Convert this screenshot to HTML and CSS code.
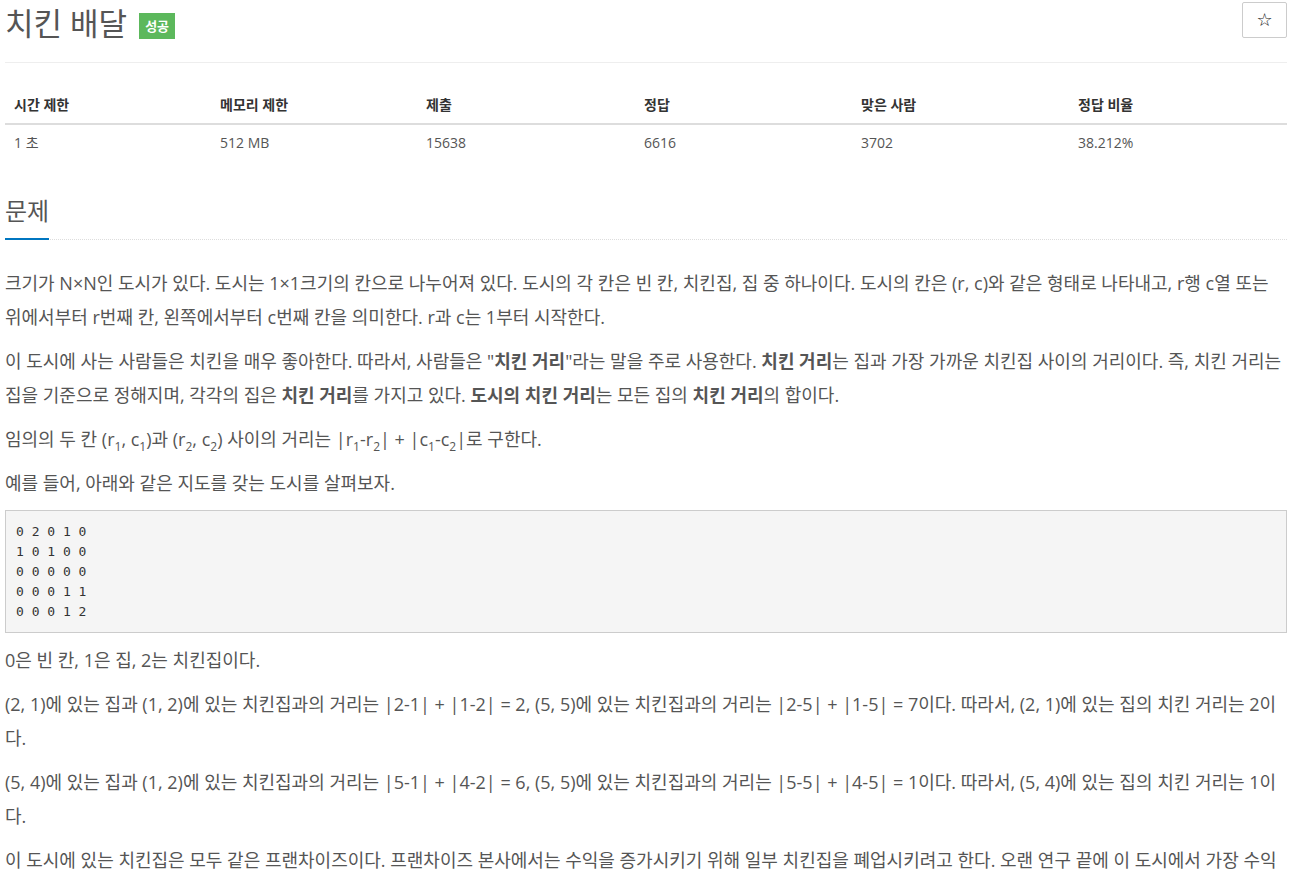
FILE: index.html
```
<!doctype html>
<html>
<head>
<meta charset="UTF-8">
<title>치킨 배달</title>
<link rel="stylesheet" href="styles.css">
</head>
<body>
<div class="container">

<div class="page-header">
  <h1 class="title">치킨 배달 <span class="label-success">성공</span></h1>
  <a class="btn-star" href="#">☆</a>
</div>

<table class="info-table">
  <thead>
    <tr>
      <th class="c1">시간 제한</th>
      <th class="c2">메모리 제한</th>
      <th class="c3">제출</th>
      <th class="c4">정답</th>
      <th class="c5">맞은 사람</th>
      <th>정답 비율</th>
    </tr>
  </thead>
  <tbody>
    <tr>
      <td>1 초</td>
      <td>512 MB</td>
      <td>15638</td>
      <td>6616</td>
      <td>3702</td>
      <td>38.212%</td>
    </tr>
  </tbody>
</table>

<section class="problem">
  <div class="headline"><h2>문제</h2></div>
  <div class="description">
    <p>크기가 N×N인 도시가 있다. 도시는 1×1크기의 칸으로 나누어져 있다. 도시의 각 칸은 빈 칸, 치킨집, 집 중 하나이다. 도시의 칸은 (r, c)와 같은 형태로 나타내고, r행 c열 또는 위에서부터 r번째 칸, 왼쪽에서부터 c번째 칸을 의미한다. r과 c는 1부터 시작한다.</p>
    <p>이 도시에 사는 사람들은 치킨을 매우 좋아한다. 따라서, 사람들은 "<strong>치킨 거리</strong>"라는 말을 주로 사용한다. <strong>치킨 거리</strong>는 집과 가장 가까운 치킨집 사이의 거리이다. 즉, 치킨 거리는 집을 기준으로 정해지며, 각각의 집은 <strong>치킨 거리</strong>를 가지고 있다. <strong>도시의 치킨 거리</strong>는 모든 집의 <strong>치킨 거리</strong>의 합이다.</p>
    <p>임의의 두 칸 (r<sub>1</sub>, c<sub>1</sub>)과 (r<sub>2</sub>, c<sub>2</sub>) 사이의 거리는 |r<sub>1</sub>-r<sub>2</sub>| + |c<sub>1</sub>-c<sub>2</sub>|로 구한다.</p>
    <p>예를 들어, 아래와 같은 지도를 갖는 도시를 살펴보자.</p>
<pre>0 2 0 1 0
1 0 1 0 0
0 0 0 0 0
0 0 0 1 1
0 0 0 1 2</pre>
    <p>0은 빈 칸, 1은 집, 2는 치킨집이다.</p>
    <p>(2, 1)에 있는 집과 (1, 2)에 있는 치킨집과의 거리는 |2-1| + |1-2| = 2, (5, 5)에 있는 치킨집과의 거리는 |2-5| + |1-5| = 7이다. 따라서, (2, 1)에 있는 집의 치킨 거리는 2이다.</p>
    <p>(5, 4)에 있는 집과 (1, 2)에 있는 치킨집과의 거리는 |5-1| + |4-2| = 6, (5, 5)에 있는 치킨집과의 거리는 |5-5| + |4-5| = 1이다. 따라서, (5, 4)에 있는 집의 치킨 거리는 1이다.</p>
    <p>이 도시에 있는 치킨집은 모두 같은 프랜차이즈이다. 프랜차이즈 본사에서는 수익을 증가시키기 위해 일부 치킨집을 폐업시키려고 한다. 오랜 연구 끝에 이 도시에서 가장 수익을 많이 낼 수 있는 치킨집의 개수는 최대 M개라는 사실을 알아내었다.</p>
  </div>
</section>

</div>
</body>
</html>
```

FILE: styles.css
```
html { overflow: hidden; }
body { margin: 0; font-family: "Open Sans", "Noto Sans CJK KR", sans-serif; font-size: 14px; color: #555; background: #fff; }
.container { margin: 0 14px 0 5px; }

.page-header { display: flex; justify-content: space-between; align-items: flex-start; border-bottom: 1px solid #eee; height: 63px; box-sizing: border-box; }
.title { margin: 3px 0 0; font-size: 31px; font-weight: normal; line-height: 40px; color: #555; display: flex; align-items: center; }
.label-success { display: inline-block; margin-left: 12px; background: #5cb85c; color: #fff; font-size: 13px; font-weight: bold; line-height: 26px; padding: 0 6px; margin-top: 5px; }
.btn-star { display: block; margin-top: 2px; width: 43px; height: 34px; border: 1px solid #ccc; border-radius: 2px; color: #111; text-decoration: none; font-size: 18px; line-height: 34px; text-align: center; font-family: "DejaVu Sans", sans-serif; }

.info-table { width: 100%; border-collapse: collapse; margin-top: 24px; }
.info-table th, .info-table td { text-align: left; padding: 8px 8px 8px 9px; line-height: 20px; }
.info-table th { color: #333; font-weight: bold; border-bottom: 2px solid #ddd; }
.info-table .c1 { width: 189px; }
.info-table .c2 { width: 189px; }
.info-table .c3 { width: 201px; }
.info-table .c4 { width: 200px; }
.info-table .c5 { width: 200px; }

.headline { margin-top: 33px; border-bottom: 1px dotted #ddd; }
.headline h2 { display: inline-block; margin: 0 0 -1px; font-size: 24px; font-weight: normal; line-height: 34px; color: #555; padding-bottom: 10px; border-bottom: 2px solid #0076c0; }

.description { margin-top: 26px; }
.description p { font-size: 18px; line-height: 34px; margin: 0 0 10px; }
.description sub { font-size: 12px; line-height: 0; }
pre { margin: 0 0 10px; padding: 10.5px 10px; background: #f5f5f5; border: 1px solid #ccc; border-radius: 0; font-family: "DejaVu Sans Mono", monospace; font-size: 13px; line-height: 20px; color: #333; }
```
